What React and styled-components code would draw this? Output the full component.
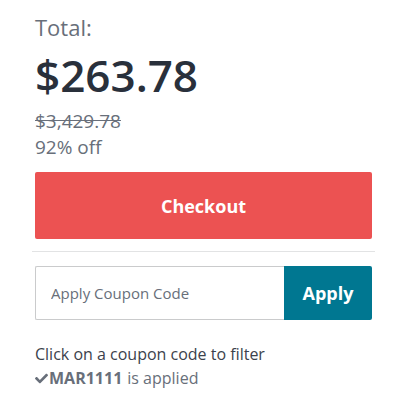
import React from "react";
import styled, { createGlobalStyle } from "styled-components";
import { FaCheck } from "react-icons/fa";

const Global = createGlobalStyle`
  html, body { margin: 0; padding: 0; background: #fff; }
  body { font-family: "Open Sans", "Liberation Sans", sans-serif; }
`;

const Panel = styled.div`
  width: 406px;
  height: 406px;
  box-sizing: border-box;
  padding: 12px 34px 0 35px;
  display: flex;
  flex-direction: column;
`;

const Label = styled.div`
  font-size: 22px;
  line-height: 30px;
  color: #686f7a;
`;

const Price = styled.div`
  font-size: 44px;
  font-weight: 600;
  line-height: 56px;
  color: #29303b;
  margin-top: 5px;
`;

const Muted = styled.div`
  font-size: 19px;
  line-height: 26px;
  color: #686f7a;
  text-decoration: ${p => (p.$struck ? "line-through" : "none")};
  margin-top: ${p => (p.$struck ? "5px" : "0")};
`;

const CheckoutButton = styled.button`
  margin-top: 12px;
  height: 67px;
  border: none;
  border-radius: 2px;
  background: #ec5252;
  color: #fff;
  font-family: inherit;
  font-size: 18px;
  font-weight: 700;
  width: 100%;
  flex-shrink: 0;
`;

const Divider = styled.div`
  margin: 12px -3px 0;
  height: 1px;
  background: #e2e3e4;
  flex-shrink: 0;
`;

const CouponRow = styled.div`
  margin-top: 14px;
  display: flex;
  height: 54px;
  flex-shrink: 0;
`;

const CouponInput = styled.input`
  flex: 1;
  min-width: 0;
  box-sizing: border-box;
  border: 1px solid #cacbcc;
  border-right: none;
  border-radius: 2px 0 0 2px;
  padding: 0 15px;
  font-family: inherit;
  font-size: 15px;
  color: #29303b;
  &::placeholder { color: #686f7a; }
`;

const ApplyButton = styled.button`
  width: 88px;
  border: none;
  border-radius: 0 2px 2px 0;
  background: #007791;
  color: #fff;
  font-family: inherit;
  font-size: 18px;
  font-weight: 700;
`;

const Note = styled.div`
  margin-top: 22px;
  font-size: 16px;
  line-height: 24px;
  color: #3c424c;
`;

const Applied = styled.div`
  font-size: 16px;
  line-height: 24px;
  color: #686f7a;
  display: flex;
  align-items: center;
  b { font-weight: 700; margin-right: 5px; }
  svg { margin-right: 1px; }
`;

export default function App() {
  return (
    <>
      <Global />
      <Panel>
        <Label>Total:</Label>
        <Price>$263.78</Price>
        <Muted $struck>$3,429.78</Muted>
        <Muted>92% off</Muted>
        <CheckoutButton>Checkout</CheckoutButton>
        <Divider />
        <CouponRow>
          <CouponInput placeholder="Apply Coupon Code" />
          <ApplyButton>Apply</ApplyButton>
        </CouponRow>
        <Note>Click on a coupon code to filter</Note>
        <Applied>
          <FaCheck size={13} color="#686f7a" />
          <b>MAR1111</b>is applied
        </Applied>
      </Panel>
    </>
  );
}
